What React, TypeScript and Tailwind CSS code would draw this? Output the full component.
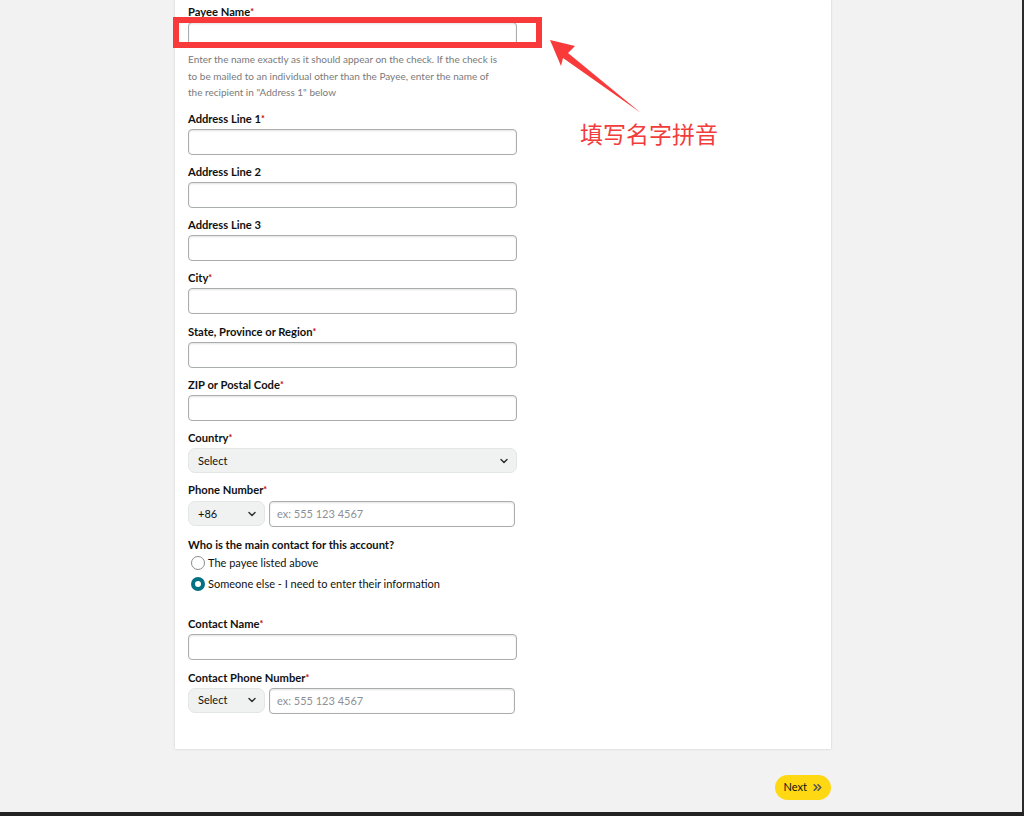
import { ChevronDown, ChevronsRight } from "lucide-react";

const font = { fontFamily: "Lato, 'Noto Sans', Arial, sans-serif" };

function Label({ text, required }: { text: string; required?: boolean }) {
  return (
    <div className="h-[14px] text-[11.2px] leading-[14px] font-bold text-[#0f1111]">
      {text}
      {required && <span className="text-[#c40000] text-[9px] align-top">*</span>}
    </div>
  );
}

function TextInput({ placeholder, w = "w-[329px]" }: { placeholder?: string; w?: string }) {
  return (
    <div
      className={`${w} h-[26px] rounded-[4px] border border-[#a9adad] bg-white shadow-[inset_0_1px_2px_rgba(15,17,17,0.12)] px-[7px] flex items-center text-[11px] text-[#8d9096]`}
    >
      {placeholder}
    </div>
  );
}

function SelectBox({ value, w }: { value: string; w: string }) {
  return (
    <div
      className={`${w} h-[25px] rounded-[7px] border border-[#e3e6e6] bg-[#f0f2f2] flex items-center justify-between pl-[9px] pr-[6px] text-[11px] text-[#0f1111]`}
    >
      <span>{value}</span>
      <ChevronDown size={12} strokeWidth={3} className="text-[#333]" />
    </div>
  );
}

function Field({ label, required }: { label: string; required?: boolean }) {
  return (
    <div className="mb-[10.33px]">
      <Label text={label} required={required} />
      <div className="mt-[3px]">
        <TextInput />
      </div>
    </div>
  );
}

function PhoneRow({ code }: { code: string }) {
  return (
    <div className="mt-[4px] flex gap-[4px]">
      <SelectBox value={code} w="w-[77px]" />
      <TextInput placeholder="ex: 555 123 4567" w="w-[246px]" />
    </div>
  );
}

function Radio({ checked, text }: { checked?: boolean; text: string }) {
  return (
    <div className="flex items-center h-[21px] pl-[3px]">
      {checked ? (
        <span className="w-[14px] h-[14px] rounded-full border-[4px] border-[#007185] bg-white" />
      ) : (
        <span className="w-[14px] h-[14px] rounded-full border border-[#888c8c] bg-white" />
      )}
      <span className="ml-[3px] text-[11px] text-[#0f1111]">{text}</span>
    </div>
  );
}

export default function App() {
  return (
    <div style={font} className="relative w-[1024px] h-[816px] bg-[#f2f2f2] overflow-hidden flex flex-col">
      <div className="flex-1 flex border-r-2 border-[#2a2a2a]">
        <div className="flex-1 pl-[175px]">
          <div className="w-[656px] bg-white shadow-[0_0_2px_rgba(0,0,0,0.18)] pl-[13px] pt-[5px] pb-[35px]">
            <Label text="Payee Name" required />
            <div className="mt-[3px]">
              <TextInput />
            </div>
            <p className="mt-[3px] w-[312px] text-[10px] leading-[16.5px] text-[#7a7a7a]">
              Enter the name exactly as it should appear on the check. If the check is to be
              mailed to an individual other than the Payee, enter the name of the recipient in
              "Address 1" below
            </p>
            <div className="h-[11px]" />
            <Field label="Address Line 1" required />
            <Field label="Address Line 2" />
            <Field label="Address Line 3" />
            <Field label="City" required />
            <Field label="State, Province or Region" required />
            <Field label="ZIP or Postal Code" required />
            <Label text="Country" required />
            <div className="mt-[3px]">
              <SelectBox value="Select" w="w-[329px]" />
            </div>
            <div className="mt-[10px]">
              <Label text="Phone Number" required />
              <PhoneRow code="+86" />
            </div>
            <div className="mt-[11px]">
              <Label text="Who is the main contact for this account?" />
              <div>
                <Radio text="The payee listed above" />
                <Radio checked text="Someone else - I need to enter their information" />
              </div>
            </div>
            <div className="mt-[23px]">
              <Field label="Contact Name" required />
            </div>
            <Label text="Contact Phone Number" required />
            <div className="-mt-[1px]">
              <PhoneRow code="Select" />
            </div>
          </div>
          <div className="w-[656px] flex justify-end mt-[26px]">
            <div className="h-[25px] pl-[9px] pr-[7px] rounded-full bg-[#ffd814] flex items-center gap-[4px] text-[11px] text-[#0f1111]">
              <span>Next</span>
              <ChevronsRight size={13} strokeWidth={3} className="text-[#555]" />
            </div>
          </div>
        </div>
      </div>
      <div className="h-[4px] bg-[#222]" />

      {/* annotation overlay */}
      <div className="absolute left-[173px] top-[17px] w-[369px] h-[31px] border-[6px] border-[#f93a3a]" />
      <svg className="absolute left-0 top-0" width="1024" height="816" viewBox="0 0 1024 816">
        <polygon points="550,40 575,46 568,53 641,113 563,58 561,66" fill="#f93a3a" />
      </svg>
      <div
        className="absolute left-[580px] top-[118px] text-[23px] leading-[30px] text-[#f23c3c]"
        style={{ fontFamily: "'Noto Sans CJK SC', sans-serif" }}
      >
        填写名字拼音
      </div>
    </div>
  );
}
